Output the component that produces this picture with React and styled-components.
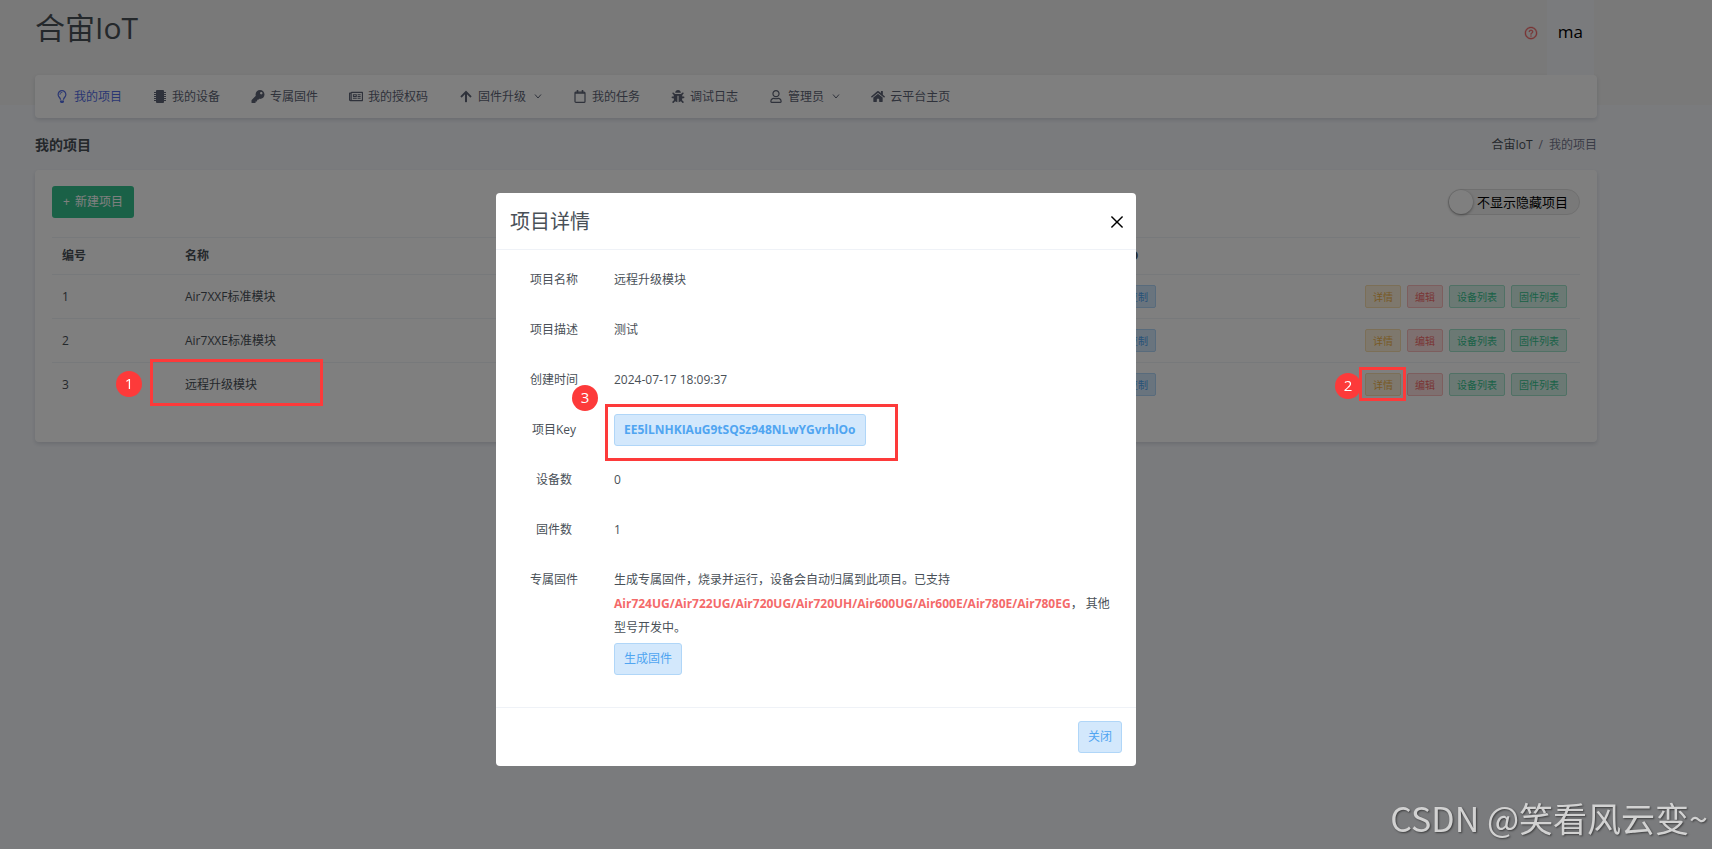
import React from 'react';
import styled, { createGlobalStyle, css } from 'styled-components';
import {
  FaRegLightbulb,
  FaKey,
  FaRegNewspaper,
  FaArrowUp,
  FaBug,
  FaRegUser,
  FaHome,
} from 'react-icons/fa';
import { AiOutlineClose, AiOutlineQuestionCircle } from 'react-icons/ai';

const colors = {
  text: '#495057',
  nav: '#5e6476',
  line: '#eff2f7',
  active: '#556ee6',
  mark: '#fd3a3a',
};

const tones = {
  info: { fg: '#50a5f1', bg: '#d3e8fc', line: '#b0d6f8' },
  warning: { fg: '#f1b44c', bg: '#fcf0db', line: '#f9dfae' },
  danger: { fg: '#f46a6a', bg: '#fde1e1', line: '#fbbcbc' },
  success: { fg: '#34c38f', bg: '#d6f3e9', line: '#a0e3cb' },
};

const GlobalStyle = createGlobalStyle`
  * {
    box-sizing: border-box;
  }
  body {
    margin: 0;
    background: #f5f7fb;
    color: ${colors.text};
    font-family: 'Open Sans', 'Noto Sans CJK SC', sans-serif;
    font-size: 12px;
    line-height: 24px;
  }
  button, input {
    font: inherit;
  }
`;

const Page = styled.div`
  min-height: 100vh;
  overflow: hidden;
`;
const Band = styled.div`
  height: 105px;
  padding: 0 115px 0 35px;
  background: #f2f2f2;
`;
const TopBar = styled.header`
  display: flex;
  justify-content: space-between;
  height: 75px;
`;
const Logo = styled.h1`
  margin: 8px 0 0;
  color: ${colors.text};
  font-size: 30px;
  font-weight: 400;
  line-height: 40px;
`;
const TopRight = styled.div`
  display: flex;
  align-items: stretch;
  padding-right: 3px;
`;
const HelpButton = styled.button`
  display: flex;
  align-items: center;
  padding: 0 9px 10px;
  border: 0;
  background: none;
  color: #f46a6a;
  font-size: 14px;
  svg {
    stroke: currentColor;
    stroke-width: 24px;
  }
`;
const UserButton = styled.button`
  padding: 0 11px 12px;
  border: 0;
  background: #f5f7fb;
  color: #000;
  font-size: 17px;
`;
const Card = styled.div`
  border-radius: 4px;
  background: #fff;
  box-shadow: 0 2px 4px rgba(18, 38, 63, 0.14);
`;
const NavBar = styled(Card).attrs({ as: 'nav' })`
  display: flex;
  align-items: center;
  gap: 31px;
  height: 43px;
  padding: 0 20px;
`;
const NavLink = styled.a`
  display: flex;
  align-items: center;
  gap: 5px;
  color: ${(props) => (props.$active ? colors.active : colors.nav)};
  text-decoration: none;
  > svg:first-child {
    width: 14px;
    height: 13px;
  }
`;
const Chevron = styled.svg`
  width: 8px;
  height: 5px;
  margin-left: 3px;
  fill: none;
  stroke: currentColor;
`;
const Main = styled.main`
  padding: 13px 115px 40px 35px;
`;
const TitleRow = styled.div`
  display: flex;
  align-items: center;
  justify-content: space-between;
  padding: 15px 0 13px;
`;
const PageTitle = styled.h2`
  margin: 0;
  color: ${colors.text};
  font-size: 14px;
  font-weight: 700;
  line-height: 24px;
`;
const Crumbs = styled.div`
  display: flex;
  gap: 6px;
  color: #74788d;
  a {
    color: ${colors.text};
    text-decoration: none;
  }
`;
const Panel = styled(Card)`
  padding: 16px 17px 35px;
`;
const Toolbar = styled.div`
  display: flex;
  align-items: center;
  justify-content: space-between;
  margin-bottom: 19px;
`;
const CreateButton = styled.button`
  display: flex;
  align-items: center;
  gap: 5px;
  height: 32px;
  padding: 0 11px;
  border: 0;
  border-radius: 3px;
  background: #34c38f;
  color: #fff;
`;
const SwitchLabel = styled.label`
  display: flex;
  align-items: center;
  width: 132px;
  height: 26px;
  border: 1px solid #dfdfdf;
  border-radius: 13px;
  background: #f2f2f2;
  color: #000;
  font-size: 13px;
  input {
    appearance: none;
    width: 24px;
    height: 24px;
    margin: 0 4px 0 0;
    border-radius: 50%;
    background: #fff;
    box-shadow: 0 1px 3px rgba(0, 0, 0, 0.4);
  }
`;
const Table = styled.table`
  width: 100%;
  border-collapse: collapse;
  table-layout: fixed;
  th,
  td {
    height: 44px;
    padding: 0 10px;
    border-top: 1px solid ${colors.line};
    text-align: left;
    white-space: nowrap;
  }
  th {
    height: 37px;
    color: ${colors.text};
  }
`;
const Col = styled.col`
  width: ${(props) => props.$width};
`;
const tone = css`
  ${({ $tone }) => css`
    border: 1px solid ${tones[$tone].line};
    background: ${tones[$tone].bg};
    color: ${tones[$tone].fg};
  `}
`;
const SmallButton = styled.button`
  ${tone};
  height: 23px;
  padding: 0 7px;
  border-radius: 2px;
  font-size: 10px;
  line-height: 20px;
`;
const Actions = styled.div`
  display: flex;
  gap: 6px;
`;
const CopyCell = styled.div`
  display: flex;
  padding-left: 2px;
`;
const Backdrop = styled.div`
  position: fixed;
  inset: 0;
  display: flex;
  align-items: flex-start;
  justify-content: center;
  padding: 193px 80px 0 0;
  background: rgba(0, 0, 0, 0.5);
`;
const Dialog = styled.section`
  width: 640px;
  border-radius: 4px;
  background: #fff;
`;
const DialogHeader = styled.header`
  display: flex;
  align-items: center;
  justify-content: space-between;
  height: 57px;
  padding: 2px 10px 0 14px;
  border-bottom: 1px solid ${colors.line};
`;
const DialogTitle = styled.h3`
  margin: 0;
  font-size: 20px;
  font-weight: 400;
`;
const CloseButton = styled.button`
  display: flex;
  padding: 0;
  border: 0;
  background: none;
  color: #000;
  font-size: 18px;
`;
const Details = styled.dl`
  margin: 0;
  padding: 5px 16px 19px;
`;
const Detail = styled.div`
  display: grid;
  grid-template-columns: 84px 1fr;
  gap: 18px;
  align-items: ${(props) => (props.$tall ? 'start' : 'center')};
  min-height: 50px;
  padding: ${(props) => (props.$tall ? '13px 0' : '0')};
  dt {
    text-align: center;
  }
  dd {
    margin: 0;
  }
`;
const Models = styled.strong`
  color: #f46a6a;
`;
const SoftButton = styled.button`
  ${tone};
  display: block;
  height: 32px;
  padding: 0 9px;
  border-radius: 3px;
  font-weight: ${(props) => (props.$bold ? 700 : 400)};
`;
const BuildButton = styled(SoftButton)`
  margin-top: 3px;
`;
const DialogFooter = styled.footer`
  display: flex;
  justify-content: flex-end;
  padding: 13px 14px;
  border-top: 1px solid ${colors.line};
`;
const Frame = styled.div`
  position: fixed;
  top: ${(props) => props.$y}px;
  left: ${(props) => props.$x}px;
  width: ${(props) => props.$w}px;
  height: ${(props) => props.$h}px;
  border: 3px solid ${colors.mark};
  pointer-events: none;
`;
const Badge = styled.div`
  position: fixed;
  top: ${(props) => props.$y}px;
  left: ${(props) => props.$x}px;
  width: 26px;
  height: 26px;
  border-radius: 50%;
  background: ${colors.mark};
  color: #fff;
  font-size: 15px;
  text-align: center;
`;
const Watermark = styled.div`
  position: fixed;
  right: 4px;
  bottom: 9px;
  color: #d2d2d2;
  font-family: 'Noto Sans CJK SC', sans-serif;
  font-size: 34px;
  line-height: 44px;
  text-shadow: 1px 1px 2px rgba(0, 0, 0, 0.5);
`;

const ChipIcon = () => (
  <svg viewBox="0 0 14 13" fill="currentColor">
    <rect x="3" y="0" width="8" height="13" rx="1" />
    <path
      d="M1 2.5h12M1 4.5h12M1 6.5h12M1 8.5h12M1 10.5h12"
      stroke="currentColor"
      strokeWidth="1"
    />
  </svg>
);

const CalendarIcon = () => (
  <svg viewBox="0 0 14 13" fill="none" stroke="currentColor" strokeWidth="1.2">
    <rect x="2" y="2" width="10" height="10.4" rx="1" />
    <path d="M2 3h10M4.5 0v3M9.5 0v3" strokeWidth="1.6" />
  </svg>
);

const navItems = [
  { label: '我的项目', icon: FaRegLightbulb, active: true },
  { label: '我的设备', icon: ChipIcon },
  { label: '专属固件', icon: FaKey },
  { label: '我的授权码', icon: FaRegNewspaper },
  { label: '固件升级', icon: FaArrowUp, menu: true },
  { label: '我的任务', icon: CalendarIcon },
  { label: '调试日志', icon: FaBug },
  { label: '管理员', icon: FaRegUser, menu: true },
  { label: '云平台主页', icon: FaHome },
];

const projects = ['Air7XXF标准模块', 'Air7XXE标准模块', '远程升级模块'];

const actions = [
  { label: '详情', tone: 'warning' },
  { label: '编辑', tone: 'danger' },
  { label: '设备列表', tone: 'success' },
  { label: '固件列表', tone: 'success' },
];

const details = [
  ['项目名称', '远程升级模块'],
  ['项目描述', '测试'],
  ['创建时间', '2024-07-17 18:09:37'],
  [
    '项目Key',
    <SoftButton key="key" $tone="info" $bold>
      EE5lLNHKIAuG9tSQSz948NLwYGvrhlOo
    </SoftButton>,
  ],
  ['设备数', '0'],
  ['固件数', '1'],
];

const ProjectTable = () => (
  <Table>
    <colgroup>
      <Col $width="123px" />
      <Col $width="auto" />
      <Col $width="247px" />
      <Col $width="225px" />
    </colgroup>
    <thead>
      <tr>
        <th>编号</th>
        <th>名称</th>
        <th>PID</th>
        <th aria-label="操作" />
      </tr>
    </thead>
    <tbody>
      {projects.map((name, i) => (
        <tr key={name}>
          <td>{i + 1}</td>
          <td>{name}</td>
          <td>
            <CopyCell>
              <SmallButton $tone="info">复制</SmallButton>
            </CopyCell>
          </td>
          <td>
            <Actions>
              {actions.map((action) => (
                <SmallButton key={action.label} $tone={action.tone}>
                  {action.label}
                </SmallButton>
              ))}
            </Actions>
          </td>
        </tr>
      ))}
    </tbody>
  </Table>
);

const ProjectDialog = () => (
  <Backdrop>
    <Dialog role="dialog" aria-labelledby="dialog-title">
      <DialogHeader>
        <DialogTitle id="dialog-title">项目详情</DialogTitle>
        <CloseButton aria-label="关闭">
          <AiOutlineClose />
        </CloseButton>
      </DialogHeader>
      <Details>
        {details.map(([label, value]) => (
          <Detail key={label}>
            <dt>{label}</dt>
            <dd>{value}</dd>
          </Detail>
        ))}
        <Detail $tall>
          <dt>专属固件</dt>
          <dd>
            生成专属固件，烧录并运行，设备会自动归属到此项目。已支持{' '}
            <Models>Air724UG/Air722UG/Air720UG/Air720UH/Air600UG/Air600E/Air780E/Air780EG</Models>
            ， 其他型号开发中。
            <BuildButton $tone="info">生成固件</BuildButton>
          </dd>
        </Detail>
      </Details>
      <DialogFooter>
        <SoftButton $tone="info">关闭</SoftButton>
      </DialogFooter>
    </Dialog>
  </Backdrop>
);

const App = () => (
  <>
    <GlobalStyle />
    <Page>
      <Band>
        <TopBar>
          <Logo>合宙IoT</Logo>
          <TopRight>
            <HelpButton aria-label="帮助">
              <AiOutlineQuestionCircle />
            </HelpButton>
            <UserButton>ma</UserButton>
          </TopRight>
        </TopBar>
        <NavBar>
          {navItems.map(({ label, icon: Icon, active, menu }) => (
            <NavLink key={label} href="#" $active={active}>
              <Icon />
              {label}
              {menu && (
                <Chevron viewBox="0 0 8 5">
                  <path d="M1 0.5l3 3.5l3-3.5" />
                </Chevron>
              )}
            </NavLink>
          ))}
        </NavBar>
      </Band>
      <Main>
        <TitleRow>
          <PageTitle>我的项目</PageTitle>
          <Crumbs>
            <a href="#">合宙IoT</a>
            <span>/</span>
            <span>我的项目</span>
          </Crumbs>
        </TitleRow>
        <Panel>
          <Toolbar>
            <CreateButton>
              <span>+</span>
              新建项目
            </CreateButton>
            <SwitchLabel>
              <input type="checkbox" />
              不显示隐藏项目
            </SwitchLabel>
          </Toolbar>
          <ProjectTable />
        </Panel>
      </Main>
    </Page>
    <ProjectDialog />
    <Frame $x={150} $y={359} $w={173} $h={47} />
    <Badge $x={116} $y={371}>1</Badge>
    <Badge $x={1335} $y={373}>2</Badge>
    <Frame $x={1359} $y={367} $w={47} $h={34} />
    <Frame $x={605} $y={404} $w={293} $h={57} />
    <Badge $x={572} $y={385}>3</Badge>
    <Watermark>CSDN @笑看风云变~</Watermark>
  </>
);

export default App;
